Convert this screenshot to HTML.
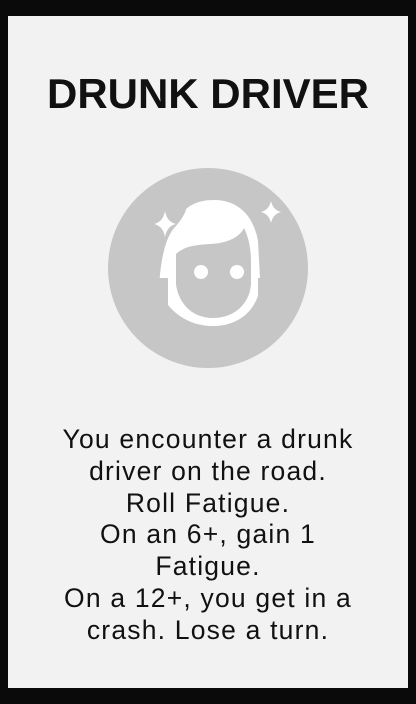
<!DOCTYPE html>
<html><head><style>
html,body{margin:0;padding:0;width:416px;height:704px;background:#0a0a0a;overflow:hidden}
.card{position:absolute;left:8px;top:16px;width:400px;height:672px;background:#f2f2f2}
h1{position:absolute;top:54px;left:0;width:400px;margin:0;text-align:center;font:bold 42px "Liberation Sans",sans-serif;color:#111}
svg{position:absolute;left:100px;top:152px}
p{position:absolute;top:408px;left:0;width:400px;margin:0;text-align:center;font:26.5px/31.8px "Liberation Sans",sans-serif;letter-spacing:1.2px;color:#111;white-space:nowrap}
</style></head><body>
<div class="card">
<h1>DRUNK DRIVER</h1>
<svg width="200" height="200" viewBox="100 168 200 200">
<circle cx="200" cy="268" r="100" fill="#c6c6c6"/>
<path d="M150 328 C150 290 152 245 168 230 C175 222 178 215 178 213 C186 206 196 204 206 204 C232 204 246 222 250 245 L252 282 L252 292 C248 315 230 330 205 330 C180 330 160 316 150 292 Z" fill="#fff" transform="translate(0,-4)"/>
<path d="M168 284 L168 254 C178 245 190 245 202 244 C222 243 232 236 236 228 C241 238 243 250 243 262 L243 284 C242 302 228 318 205 318 C183 318 170 302 168 284 Z" fill="#c6c6c6"/>
<rect x="150" y="278" width="10" height="30" fill="#c6c6c6"/>
<rect x="250" y="278" width="10" height="30" fill="#c6c6c6"/>
<circle cx="193" cy="272" r="7" fill="#fff"/>
<circle cx="229" cy="272" r="7" fill="#fff"/>
<path d="M157 211 Q159 222 168 224 Q159 226 157 237 Q155 226 146 224 Q155 222 157 211Z" fill="#fff"/>
<path d="M263 201 Q265 210 273 212 Q265 214 263 223 Q261 214 253 212 Q261 210 263 201Z" fill="#fff"/>
</svg>
<p>You encounter a drunk<br>driver on the road.<br>Roll Fatigue.<br>On an 6+, gain 1<br>Fatigue.<br>On a 12+, you get in a<br>crash. Lose a turn.</p>
</div>
</body></html>
